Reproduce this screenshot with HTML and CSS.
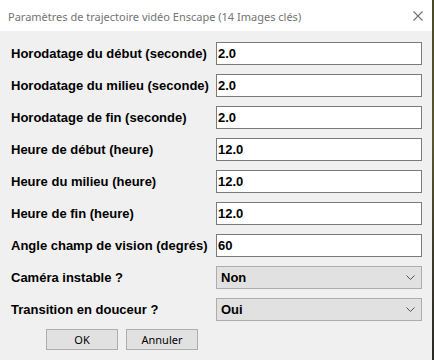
FILE: index.html
```html
<!DOCTYPE html>
<html lang="fr">
<head>
<meta charset="utf-8">
<title>Paramètres de trajectoire vidéo Enscape</title>
<link rel="stylesheet" href="styles.css">
</head>
<body>
<div class="screen">
  <div class="window">
    <div class="titlebar">
      <span class="title">Paramètres de trajectoire vidéo Enscape (14 Images clés)</span>
      <svg class="close" width="10" height="10" viewBox="0 0 10 10"><path d="M0.5 0.5 L9.5 9.5 M9.5 0.5 L0.5 9.5" stroke="#6f6f6f" stroke-width="1.1" fill="none"/></svg>
    </div>
    <div class="content">
      <div class="form">
        <label class="lbl">Horodatage du début (seconde)</label>
        <div class="field">2.0</div>
        <label class="lbl">Horodatage du milieu (seconde)</label>
        <div class="field">2.0</div>
        <label class="lbl">Horodatage de fin (seconde)</label>
        <div class="field">2.0</div>
        <label class="lbl">Heure de début (heure)</label>
        <div class="field">12.0</div>
        <label class="lbl">Heure du milieu (heure)</label>
        <div class="field">12.0</div>
        <label class="lbl">Heure de fin (heure)</label>
        <div class="field">12.0</div>
        <label class="lbl">Angle champ de vision (degrés)</label>
        <div class="field">60</div>
        <label class="lbl">Caméra instable ?</label>
        <div class="combo"><span>Non</span><svg width="9" height="5" viewBox="0 0 9 5"><path d="M0.5 0.5 L4.5 4.5 L8.5 0.5" stroke="#555" stroke-width="1" fill="none"/></svg></div>
        <label class="lbl">Transition en douceur ?</label>
        <div class="combo"><span>Oui</span><svg width="9" height="5" viewBox="0 0 9 5"><path d="M0.5 0.5 L4.5 4.5 L8.5 0.5" stroke="#555" stroke-width="1" fill="none"/></svg></div>
      </div>
      <div class="buttons">
        <div class="btn">OK</div>
        <div class="btn">Annuler</div>
      </div>
    </div>
  </div>
  <div class="edge"></div>
</div>
</body>
</html>
```
FILE: styles.css
```css
html, body {
  margin: 0;
  padding: 0;
  width: 434px;
  height: 360px;
  overflow: hidden;
  background: #f0f0f0;
}
.screen {
  display: flex;
  width: 434px;
  height: 360px;
}
.window {
  width: 432px;
  height: 360px;
  display: flex;
  flex-direction: column;
  background: #f0f0f0;
}
.edge {
  width: 2px;
  height: 360px;
  background: linear-gradient(#4a4a2a 0%, #5a5630 40%, #3c3a2a 70%, #2a2a26 100%);
}
.titlebar {
  height: 31px;
  background: #ffffff;
  display: flex;
  align-items: center;
  justify-content: space-between;
  padding: 0 9px 0 8px;
  box-sizing: border-box;
}
.title {
  font-family: "Noto Sans", sans-serif;
  font-size: 11px;
  color: #737373;
  position: relative;
  top: 1px;
}
.close {
  display: block;
}
.content {
  padding: 11px 10px 0 10px;
}
.form {
  display: grid;
  grid-template-columns: 206px 206px;
  grid-auto-rows: 23px;
  row-gap: 9px;
}
.lbl {
  font-family: "Liberation Sans", Arial, sans-serif;
  font-weight: bold;
  font-size: 13px;
  color: #000;
  display: flex;
  align-items: center;
  white-space: nowrap;
  padding-left: 1px;
}
.field {
  border: 1px solid #7a7a7a;
  background: #fff;
  font-family: "Liberation Sans", Arial, sans-serif;
  font-weight: bold;
  font-size: 13px;
  display: flex;
  align-items: center;
  padding-left: 1px;
}
.combo {
  border: 1px solid #adadad;
  background: #e1e1e1;
  font-family: "Liberation Sans", Arial, sans-serif;
  font-weight: bold;
  font-size: 13px;
  display: flex;
  align-items: center;
  justify-content: space-between;
  padding: 0 6px 0 4px;
}
.buttons {
  display: flex;
  gap: 8px;
  padding-left: 36px;
  margin-top: 8px;
}
.btn {
  width: 72px;
  height: 21px;
  box-sizing: border-box;
  border: 1px solid #adadad;
  background: #e1e1e1;
  font-family: "Noto Sans", sans-serif;
  font-size: 11px;
  color: #000;
  display: flex;
  align-items: center;
  justify-content: center;
}
```
